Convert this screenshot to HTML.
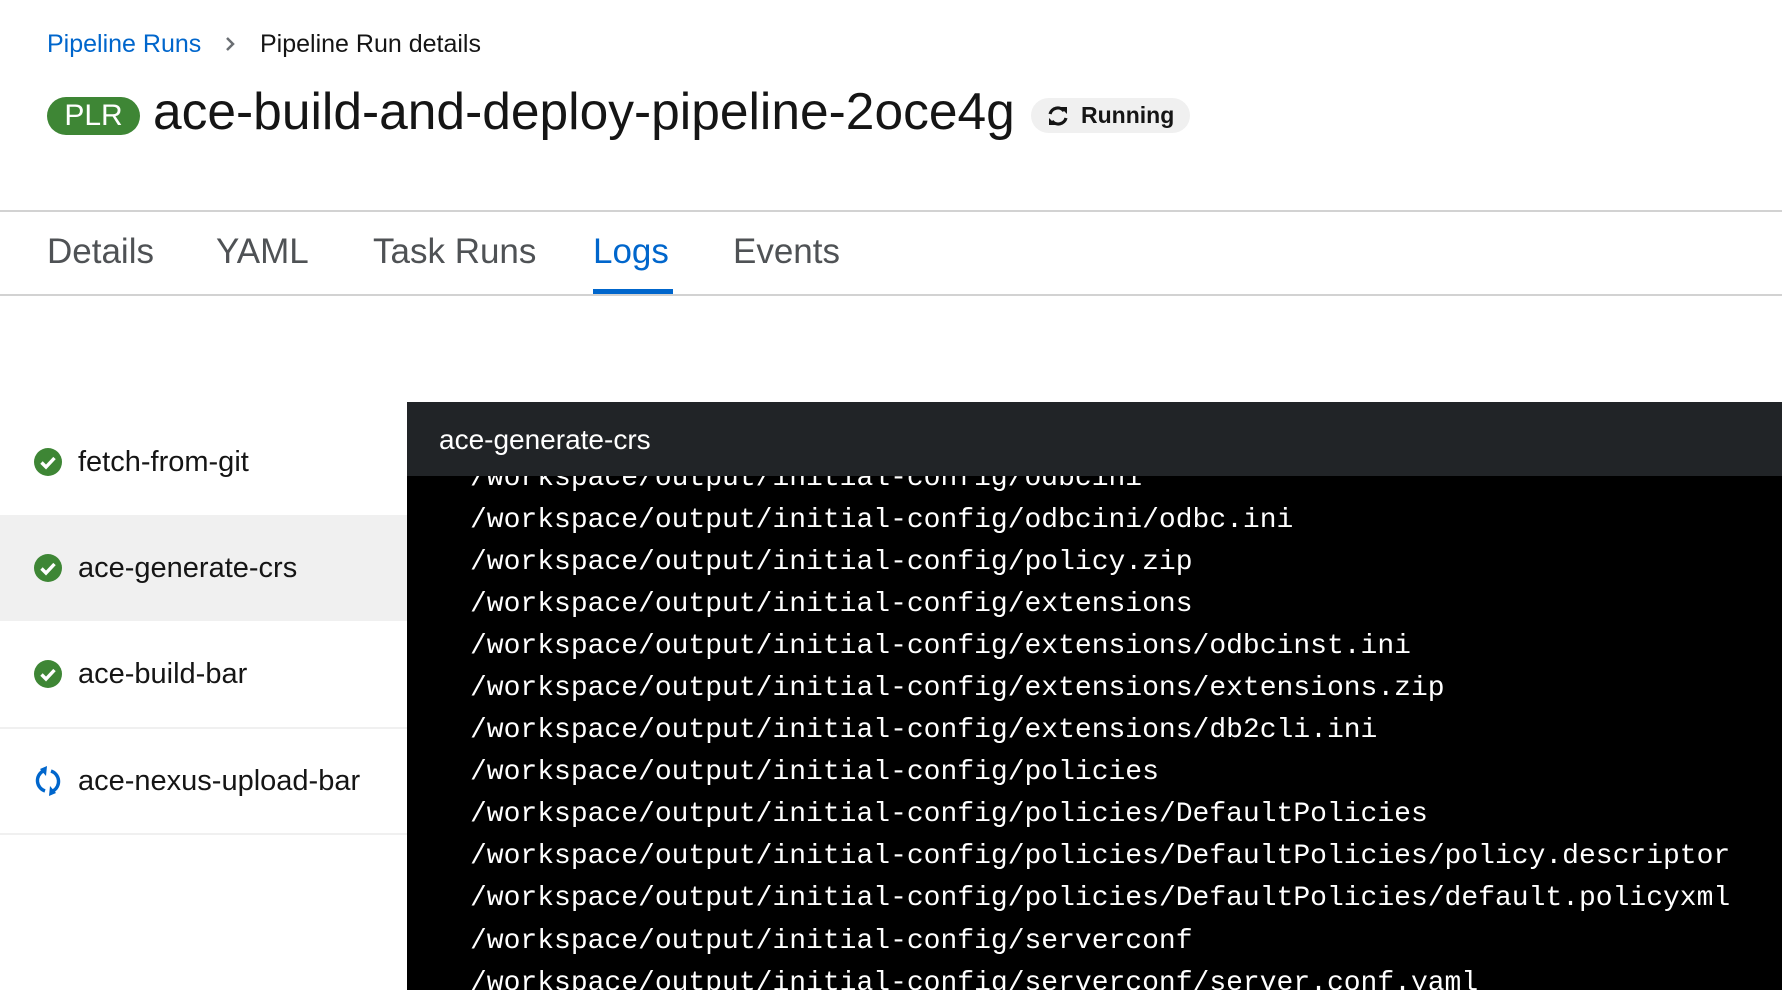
<!DOCTYPE html>
<html><head><meta charset="utf-8"><style>
*{margin:0;padding:0;box-sizing:border-box}
body{width:1782px;height:990px;overflow:hidden;background:#fff;font-family:"Liberation Sans",sans-serif;color:#151515;position:relative}
.a{position:absolute;white-space:nowrap}
.bc{top:29px;font-size:25px;line-height:30px}
.tab{top:232px;font-size:35px;line-height:40px;color:#4f5255}
.row{position:absolute;left:0;width:407px;height:106px;display:flex;align-items:center}
.row span{position:absolute;left:78px;font-size:29px;color:#151515}
.row svg{position:absolute;left:34px}
.log{position:absolute;left:470px;top:455px;font-family:"Liberation Mono",monospace;font-size:28px;line-height:42.05px;color:#fff;white-space:pre}
</style></head><body>
<div class="a bc" style="left:47px;color:#0066cc">Pipeline Runs</div>
<svg class="a" style="left:224px;top:35px" width="12" height="18" viewBox="0 0 12 18"><path d="M3 3l6 6-6 6" fill="none" stroke="#6a6e73" stroke-width="2.5"/></svg>
<div class="a bc" style="left:260px">Pipeline Run details</div>
<div class="a" style="left:47px;top:97px;width:93px;height:38px;border-radius:19px;background:#3e8635;color:#fff;font-size:30px;line-height:38px;text-align:center">PLR</div>
<div class="a" style="left:153px;top:82px;font-size:51.5px;line-height:58px">ace-build-and-deploy-pipeline-2oce4g</div>
<div class="a" style="left:1031px;top:98px;width:159px;height:35px;border-radius:18px;background:#f0f0f0;font-size:23px;line-height:35px;font-weight:bold;color:#151515;padding-left:50px">Running</div>
<svg class="a" style="left:1046px;top:105px" width="24" height="22" viewBox="0 0 24 22"><path d="M4 9A8 8 0 0 1 18 6" fill="none" stroke="#151515" stroke-width="3.2"/><path d="M20 13A8 8 0 0 1 6 16" fill="none" stroke="#151515" stroke-width="3.2"/><path d="M14 2h7v7z" fill="#151515"/><path d="M10 20H3v-7z" fill="#151515"/></svg>
<div class="a" style="left:0;top:210px;width:1782px;height:2px;background:#d2d2d2"></div>
<div class="a tab" style="left:47px">Details</div>
<div class="a tab" style="left:216px">YAML</div>
<div class="a tab" style="left:373px">Task Runs</div>
<div class="a tab" style="left:593px;color:#0066cc">Logs</div>
<div class="a tab" style="left:733px">Events</div>
<div class="a" style="left:0;top:294px;width:1782px;height:2px;background:#d2d2d2"></div>
<div class="a" style="left:593px;top:289px;width:80px;height:5px;background:#0066cc"></div>

<div class="row" style="top:409px"><svg width="28" height="28" viewBox="0 0 28 28"><circle cx="14" cy="14" r="14" fill="#3e8635"/><path d="M7.5 14.5l4.5 4.5 8.5-9" fill="none" stroke="#fff" stroke-width="3.4"/></svg><span>fetch-from-git</span></div>
<div class="row" style="top:515px;background:#f0f0f0"><svg width="28" height="28" viewBox="0 0 28 28"><circle cx="14" cy="14" r="14" fill="#3e8635"/><path d="M7.5 14.5l4.5 4.5 8.5-9" fill="none" stroke="#fff" stroke-width="3.4"/></svg><span>ace-generate-crs</span></div>
<div class="row" style="top:621px;height:108px;border-bottom:2px solid #f0f0f0"><svg width="28" height="28" viewBox="0 0 28 28"><circle cx="14" cy="14" r="14" fill="#3e8635"/><path d="M7.5 14.5l4.5 4.5 8.5-9" fill="none" stroke="#fff" stroke-width="3.4"/></svg><span>ace-build-bar</span></div>
<div class="row" style="top:729px;border-bottom:2px solid #f0f0f0"><svg width="28" height="32" viewBox="0 0 28 32"><path d="M9 6A11 11 0 0 0 11 26" fill="none" stroke="#0066cc" stroke-width="3.4"/><path d="M19 26A11 11 0 0 0 17 6" fill="none" stroke="#0066cc" stroke-width="3.4"/><path d="M13 1l-1 10-6-7z" fill="#0066cc"/><path d="M15 31l1-10 6 7z" fill="#0066cc"/></svg><span>ace-nexus-upload-bar</span></div>

<div class="a" style="left:407px;top:402px;width:1375px;height:588px;background:#000;overflow:hidden">
<div class="log" style="left:63px;top:56px">/workspace/output/initial-config/odbcini
/workspace/output/initial-config/odbcini/odbc.ini
/workspace/output/initial-config/policy.zip
/workspace/output/initial-config/extensions
/workspace/output/initial-config/extensions/odbcinst.ini
/workspace/output/initial-config/extensions/extensions.zip
/workspace/output/initial-config/extensions/db2cli.ini
/workspace/output/initial-config/policies
/workspace/output/initial-config/policies/DefaultPolicies
/workspace/output/initial-config/policies/DefaultPolicies/policy.descriptor
/workspace/output/initial-config/policies/DefaultPolicies/default.policyxml
/workspace/output/initial-config/serverconf
/workspace/output/initial-config/serverconf/server.conf.yaml</div>
<div class="a" style="left:0;top:0;width:1375px;height:74px;background:#212427;color:#fff;font-size:28px;line-height:76px;padding-left:32px">ace-generate-crs</div>
</div>
</body></html>
